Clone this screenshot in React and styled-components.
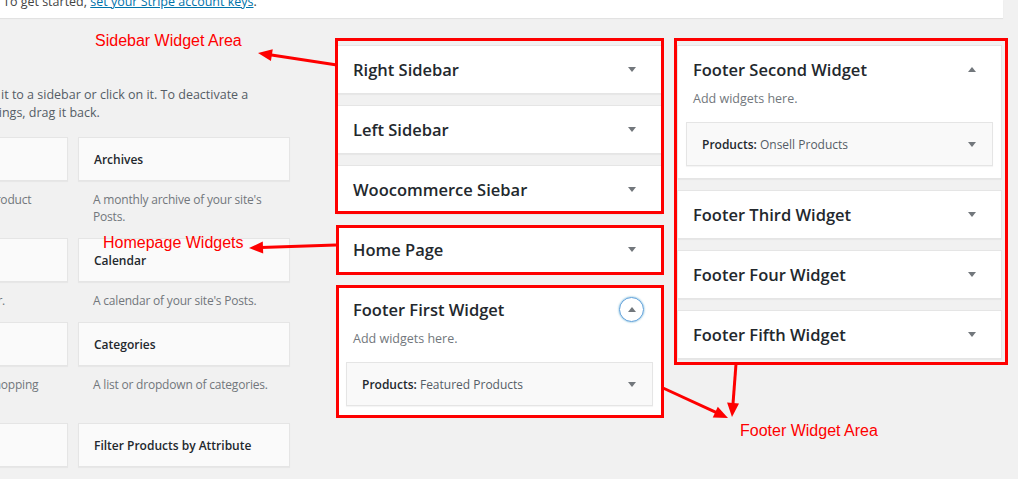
import React from "react";
import styled, { createGlobalStyle } from "styled-components";

const GlobalStyle = createGlobalStyle`
  html, body {
    margin: 0;
    padding: 0;
    background: #f1f1f1;
  }
  body {
    font-family: "Open Sans", "Segoe UI", sans-serif;
    font-size: 12px;
    color: #444;
  }
`;

const available = [
  { title: "Active Product Filters", lines: ["Display a list of active product", "filters."] },
  { title: "Archives", lines: ["A monthly archive of your site's", "Posts."] },
  { title: "Audio", lines: ["Displays an audio player."] },
  { title: "Calendar", lines: ["A calendar of your site's Posts."] },
  { title: "Cart", lines: ["Display the customer shopping", "cart."] },
  { title: "Categories", lines: ["A list or dropdown of categories."] },
  { title: "Custom HTML", lines: [] },
  { title: "Filter Products by Attribute", lines: [] },
];

const arrows = [
  { from: [337, 65], to: [258, 53] },
  { from: [336, 245], to: [249, 248] },
  { from: [663, 388], to: [728, 418] },
  { from: [736, 364], to: [732, 417] },
];

const App = () => {
  return (
    <Screen>
      <GlobalStyle />
      <Notice>
        <NoticeText>
          To get started, <NoticeLink href="#">set your Stripe account keys</NoticeLink>.
        </NoticeText>
      </Notice>

      <Columns>
        <Available>
          <Intro>
            To activate a widget drag it to a sidebar or click on it. To deactivate a widget and
            delete its settings, drag it back.
          </Intro>
          <WidgetGrid>
            {available.map((w) => (
              <div key={w.title}>
                <TileTitle>{w.title}</TileTitle>
                <TileDesc>
                  {w.lines.map((l, i) => (
                    <React.Fragment key={i}>
                      {i > 0 && <br />}
                      {l}
                    </React.Fragment>
                  ))}
                </TileDesc>
              </div>
            ))}
          </WidgetGrid>
        </Available>

        <SidebarColumn $gap={47}>
          <Marked $top={-7} $left={-2} $right={-2} $bottom={0}>
            <Area title="Right Sidebar" />
            <Area title="Left Sidebar" />
            <Area title="Woocommerce Siebar" />
          </Marked>
          <Marked $top={0} $left={-1} $right={-2} $bottom={-1}>
            <Area title="Home Page" />
          </Marked>
          <Marked $top={0} $left={-1} $right={-2} $bottom={-1}>
            <Area title="Footer First Widget" open focused item="Featured Products" tail={10} />
          </Marked>
        </SidebarColumn>

        <SidebarColumn $gap={15}>
          <Marked $top={-7} $left={-3} $right={-6} $bottom={-6}>
            <Area title="Footer Second Widget" open item="Onsell Products" tail={12} />
            <Area title="Footer Third Widget" />
            <Area title="Footer Four Widget" />
            <Area title="Footer Fifth Widget" />
          </Marked>
        </SidebarColumn>
      </Columns>

      <Overlay width="1018" height="479" viewBox="0 0 1018 479">
        {arrows.map((a, i) => (
          <Arrow key={i} from={a.from} to={a.to} />
        ))}
      </Overlay>
      <Callout $x={95} $y={32}>Sidebar Widget Area</Callout>
      <Callout $x={103} $y={234}>Homepage Widgets</Callout>
      <Callout $x={740} $y={422}>Footer Widget Area</Callout>
    </Screen>
  );
};

const Area = ({ title, open, focused, item, tail }) => {
  return (
    <AreaBox>
      <AreaHead>
        <AreaName>{title}</AreaName>
        {focused ? (
          <Toggle>
            <Caret $up />
          </Toggle>
        ) : (
          <Caret $up={open} />
        )}
      </AreaHead>
      {open && (
        <AreaBody $tail={tail}>
          <AreaDesc>Add widgets here.</AreaDesc>
          <Placed>
            <span>
              <PlacedType>Products:</PlacedType> {item}
            </span>
            <Caret />
          </Placed>
        </AreaBody>
      )}
    </AreaBox>
  );
};

const Arrow = ({ from, to }) => {
  const dx = to[0] - from[0];
  const dy = to[1] - from[1];
  const len = Math.hypot(dx, dy);
  const ux = dx / len;
  const uy = dy / len;
  const bx = to[0] - ux * 14;
  const by = to[1] - uy * 14;
  const head = [
    [to[0], to[1]],
    [bx - uy * 6, by + ux * 6],
    [bx + uy * 6, by - ux * 6],
  ]
    .map((p) => p.join(","))
    .join(" ");
  return (
    <g>
      <line x1={from[0]} y1={from[1]} x2={bx + ux * 2} y2={by + uy * 2} stroke="#fe0000" strokeWidth="3" />
      <polygon points={head} fill="#fe0000" />
    </g>
  );
};

export default App;

const Screen = styled.div`
  position: relative;
  width: 1018px;
  height: 479px;
  overflow: hidden;
`;

const Notice = styled.div`
  width: 1003px;
  height: 18px;
  background: #fff;
  box-shadow: 0 1px 1px rgba(0, 0, 0, 0.06);
  overflow: hidden;
`;

const NoticeText = styled.p`
  margin: -7px 0 0 3px;
  font-size: 12.5px;
  line-height: 18px;
  white-space: nowrap;
`;

const NoticeLink = styled.a`
  color: #0073aa;
  text-decoration: underline;
`;

const Columns = styled.div`
  display: flex;
  align-items: flex-start;
  margin-left: -144px;
  padding-top: 27px;
`;

const Available = styled.section`
  flex: none;
  width: 434px;
`;

const Intro = styled.p`
  max-width: 400px;
  margin: 41px 0 15px -3px;
  font-size: 12.5px;
  line-height: 18px;
  color: #555d66;
`;

const WidgetGrid = styled.div`
  display: grid;
  grid-template-columns: 212px 212px;
  column-gap: 10px;
`;

const TileTitle = styled.div`
  height: 44px;
  box-sizing: border-box;
  display: flex;
  align-items: center;
  padding: 0 15px;
  background: #fafafa;
  border: 1px solid #e5e5e5;
  box-shadow: 0 1px 1px rgba(0, 0, 0, 0.04);
  font-weight: 600;
  color: #23282d;
  white-space: nowrap;
`;

const TileDesc = styled.p`
  margin: 10px 15px 13px;
  min-height: 17px;
  line-height: 17px;
  letter-spacing: -0.2px;
  color: #72777c;
  white-space: nowrap;
`;

const SidebarColumn = styled.div`
  flex: none;
  width: 325px;
  margin-left: ${(p) => p.$gap}px;
  display: flex;
  flex-direction: column;
  gap: 11px;
`;

const Marked = styled.div`
  position: relative;
  display: flex;
  flex-direction: column;
  gap: 11px;

  &::after {
    content: "";
    position: absolute;
    top: ${(p) => p.$top}px;
    left: ${(p) => p.$left}px;
    right: ${(p) => p.$right}px;
    bottom: ${(p) => p.$bottom}px;
    border: 3px solid #fe0000;
    pointer-events: none;
  }
`;

const AreaBox = styled.div`
  background: #fff;
  border: 1px solid #e5e5e5;
  box-shadow: 0 1px 1px rgba(0, 0, 0, 0.04);
`;

const AreaHead = styled.div`
  height: 47px;
  display: flex;
  align-items: center;
  justify-content: space-between;
  padding: 0 25px 0 15px;
`;

const AreaName = styled.h2`
  margin: 0;
  font-size: 16.5px;
  font-weight: 600;
  color: #23282d;
`;

const Caret = styled.span`
  width: 0;
  height: 0;
  border-left: 4px solid transparent;
  border-right: 4px solid transparent;
  ${(p) => (p.$up ? "border-bottom: 5px solid #72777c;" : "border-top: 5px solid #72777c;")}
`;

const Toggle = styled.span`
  width: 23px;
  height: 23px;
  margin-right: -8px;
  border-radius: 50%;
  border: 1px solid #5b9dd9;
  box-shadow: 0 0 2px rgba(30, 140, 190, 0.8);
  display: flex;
  align-items: center;
  justify-content: center;
`;

const AreaBody = styled.div`
  padding: 0 8px ${(p) => p.$tail}px;
`;

const AreaDesc = styled.p`
  margin: -3px 7px 0;
  font-size: 12.5px;
  line-height: 17px;
  color: #72777c;
`;

const Placed = styled.div`
  margin-top: 15px;
  height: 44px;
  box-sizing: border-box;
  display: flex;
  align-items: center;
  justify-content: space-between;
  padding: 0 16px 0 15px;
  background: #f9f9f9;
  border: 1px solid #e5e5e5;
  box-shadow: 0 1px 1px rgba(0, 0, 0, 0.04);
  color: #555d66;
`;

const PlacedType = styled.strong`
  font-weight: 600;
  color: #23282d;
`;

const Overlay = styled.svg`
  position: absolute;
  top: 0;
  left: 0;
  pointer-events: none;
`;

const Callout = styled.span`
  position: absolute;
  left: ${(p) => p.$x}px;
  top: ${(p) => p.$y}px;
  font-family: "Liberation Sans", Arial, sans-serif;
  font-size: 16px;
  line-height: 18px;
  color: #fe0000;
  white-space: nowrap;
`;
